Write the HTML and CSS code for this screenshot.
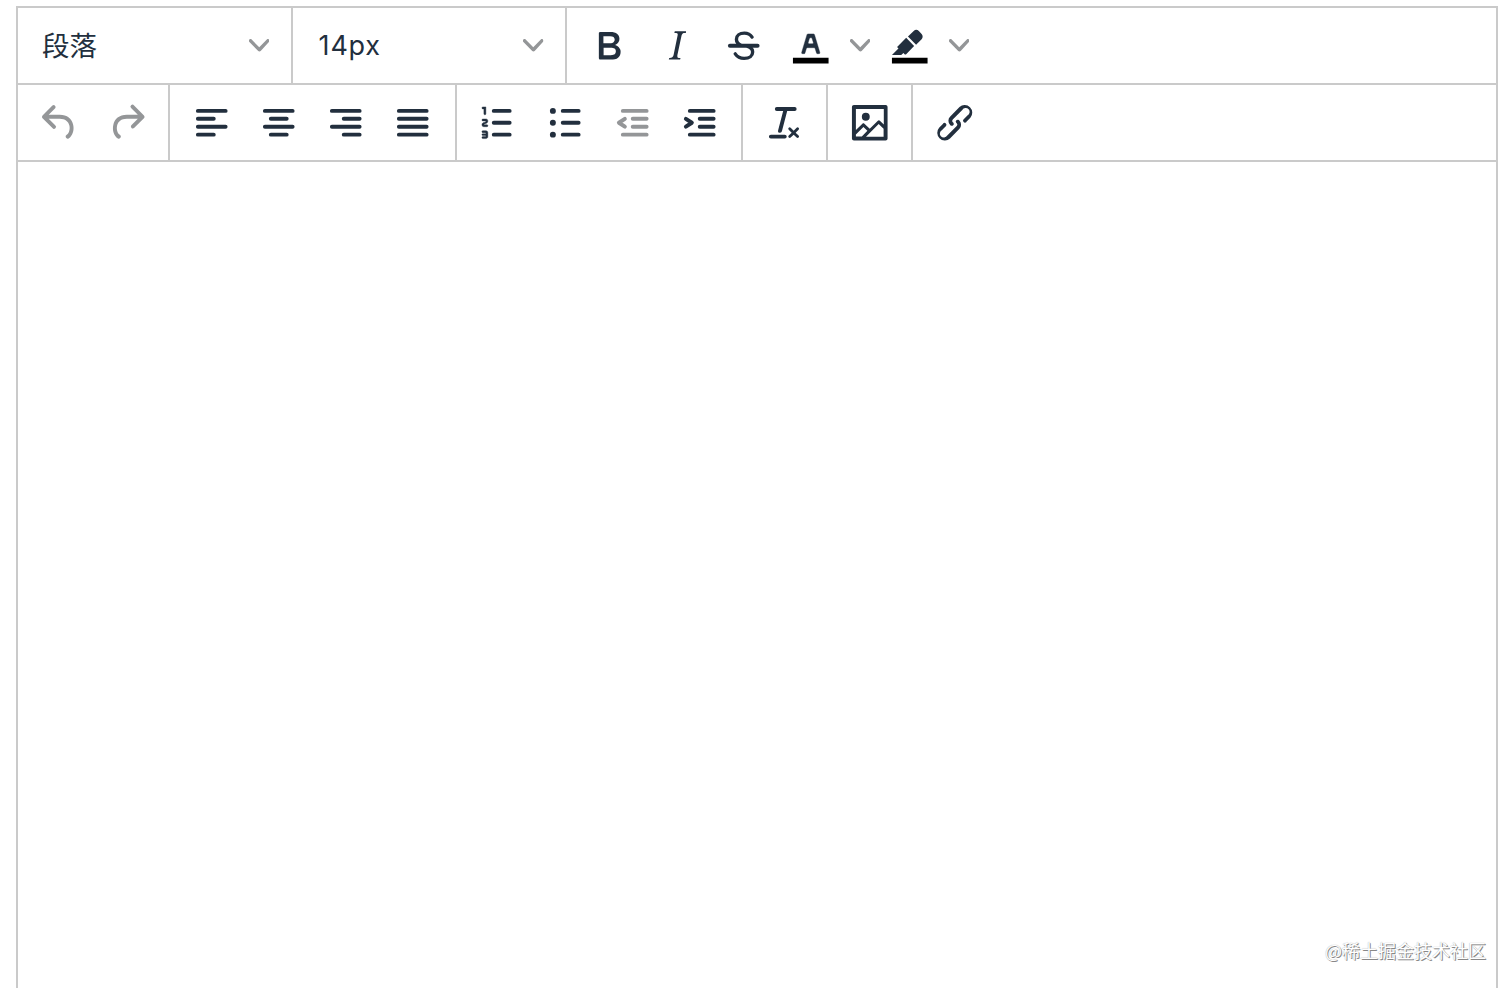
FILE: index.html
```html
<!DOCTYPE html>
<html lang="zh-CN">
<head>
<meta charset="utf-8">
<title>编辑器</title>
<link rel="stylesheet" href="styles.css">
</head>
<body>
<svg class="sprite" aria-hidden="true">
  <symbol id="chevron" viewBox="0 0 10 10"><path d="M8.7 2.2c.3-.3.8-.3 1 0 .4.4.4.9 0 1.2L5.7 7.8c-.3.3-.9.3-1.2 0L.2 3.4a.8.8 0 0 1 0-1.2c.3-.3.8-.3 1.1 0L5 6l3.7-3.8z"/></symbol>
</svg>
<main class="editor">
  <header class="toolbar">
    <div class="row">
      <div class="group group-select"><button class="select"><span class="label">段落</span><svg class="chevron"><use href="#chevron"/></svg></button></div>
      <div class="group group-select"><button class="select"><span class="label size">14px</span><svg class="chevron"><use href="#chevron"/></svg></button></div>
      <div class="group">
        <button class="btn"><svg class="icon" viewBox="0 0 24 24"><path fill-rule="evenodd" d="M7.8 19c-.3 0-.5 0-.6-.2l-.2-.5V5.7c0-.2 0-.4.2-.5l.6-.2h5c1.5 0 2.7.3 3.5 1 .7.6 1.1 1.4 1.1 2.5a3 3 0 0 1-.6 1.9c-.4.6-1 1-1.6 1.2.4.1.9.3 1.3.6s.8.7 1 1.2c.4.4.5 1 .5 1.6 0 1.3-.4 2.3-1.3 3-.8.7-2.1 1-3.8 1H7.8zm5-8.3c.6 0 1.2-.1 1.6-.5.4-.3.6-.7.6-1.3 0-1.1-.8-1.7-2.3-1.7H9.3v3.5h3.4zm.5 6c.7 0 1.3-.1 1.7-.4.4-.4.6-.9.6-1.5s-.2-1-.7-1.4c-.4-.3-1-.4-2-.4H9.4v3.8h4z"/></svg></button>
        <button class="btn"><svg class="icon" viewBox="0 0 24 24"><path d="M16.7 4.7l-.1.9h-.3c-.6 0-1 0-1.4.3-.3.3-.4.6-.5 1.1l-2.1 9.8v.6c0 .5.4.8 1.4.8h.2l-.2.8H8l.2-.8h.2c1.1 0 1.8-.5 2-1.5l2-9.8.1-.5c0-.6-.4-.8-1.4-.8h-.3l.2-.9h5.8z"/></svg></button>
        <button class="btn"><svg class="icon" viewBox="0 0 24 24"><path class="curve" d="M16.2 7.6C15.3 6.2 13.9 5.6 12.3 5.6 9.9 5.6 8.3 6.8 8.3 8.7c0 1.2.7 2.3 2.2 3M14 12.3c1.7.6 2.5 1.5 2.5 2.8 0 2-1.7 3.3-4.3 3.3-2 0-3.5-.8-4.5-2.3"/><path d="M5 11h14a1 1 0 0 1 0 2H5a1 1 0 0 1 0-2z"/></svg></button>
        <button class="btn"><svg class="icon" viewBox="0 0 24 24"><path class="swatch" d="M3 18h18v3H3z"/><path class="letter" fill-rule="evenodd" d="M8.7 16h-.8a.5.5 0 0 1-.5-.6l2.7-9c.1-.3.3-.4.5-.4h2.8c.2 0 .4.1.5.4l2.7 9a.5.5 0 0 1-.5.6h-.8a.5.5 0 0 1-.4-.4l-.7-2.2c0-.3-.3-.4-.5-.4h-3.4c-.2 0-.4.1-.5.4l-.7 2.2c0 .3-.2.4-.4.4zm2.6-7.6l-.6 2a.5.5 0 0 0 .5.6h1.6a.5.5 0 0 0 .5-.6l-.6-2c0-.3-.3-.4-.5-.4h-.4c-.2 0-.4.1-.5.4z"/></svg></button>
        <button class="drop"><svg class="chevron"><use href="#chevron"/></svg></button>
        <button class="btn"><svg class="icon" viewBox="0 0 24 24"><path class="swatch" d="M3 18h18v3H3z"/><path d="M7.7 16.7H3l3.3-3.3-.7-.8L10.2 8l4 4.1-4 4.2c-.2.2-.6.2-.8 0l-.6-.7-1.1 1.1zm3.4-9.4l2.9-2.8a2 2 0 0 1 2.6 0L18 6c.7.7.7 2 0 2.7l-2.8 2.8z"/></svg></button>
        <button class="drop"><svg class="chevron"><use href="#chevron"/></svg></button>
      </div>
    </div>
    <div class="row">
      <div class="group">
        <button class="btn disabled"><svg class="icon" viewBox="0 0 24 24"><path d="M6.4 8H12c3.7 0 6.2 2 6.8 5.1.6 2.7-.4 5.6-2.3 6.8a1 1 0 0 1-1-1.8c1.1-.6 1.8-2.7 1.4-4.6-.5-2.1-2.1-3.5-4.9-3.5H6.4l3.3 3.3a1 1 0 1 1-1.4 1.4l-5-5a1 1 0 0 1 0-1.4l5-5a1 1 0 0 1 1.4 1.4L6.4 8z"/></svg></button>
        <button class="btn disabled"><svg class="icon" viewBox="0 0 24 24"><path d="M17.6 10H12c-2.8 0-4.4 1.4-4.9 3.5-.4 2 .3 4 1.4 4.6a1 1 0 1 1-1 1.8c-2-1.2-2.9-4.1-2.3-6.8.6-3 3-5.1 6.8-5.1h5.6l-3.3-3.3a1 1 0 1 1 1.4-1.4l5 5a1 1 0 0 1 0 1.4l-5 5a1 1 0 0 1-1.4-1.4l3.3-3.3z"/></svg></button>
      </div>
      <div class="group">
        <button class="btn"><svg class="icon line" viewBox="0 0 24 24"><path d="M5 6h14M5 10h8M5 14h14M5 18h8"/></svg></button>
        <button class="btn"><svg class="icon line" viewBox="0 0 24 24"><path d="M5 6h14M8 10h8M5 14h14M8 18h8"/></svg></button>
        <button class="btn"><svg class="icon line" viewBox="0 0 24 24"><path d="M5 6h14M11 10h8M5 14h14M11 18h8"/></svg></button>
        <button class="btn"><svg class="icon line" viewBox="0 0 24 24"><path d="M5 6h14M5 10h14M5 14h14M5 18h14"/></svg></button>
      </div>
      <div class="group">
        <button class="btn"><svg class="icon" viewBox="0 0 24 24"><path d="M10 17h8a1 1 0 0 1 0 2h-8a1 1 0 0 1 0-2zm0-6h8a1 1 0 0 1 0 2h-8a1 1 0 0 1 0-2zm0-6h8a1 1 0 0 1 0 2h-8a1 1 0 0 1 0-2z"/><path class="digits" d="M6 4v3.5c0 .3-.2.5-.5.5a.5.5 0 0 1-.5-.5V5h-.5a.5.5 0 0 1 0-1H6zm-1 8.8l.2.2h1.3c.3 0 .5.2.5.5s-.2.5-.5.5H4.9a1 1 0 0 1-.9-1V13c0-.4.3-.8.6-1l1.2-.4.2-.3a.2.2 0 0 0-.2-.2H4.5a.5.5 0 0 1-.5-.5c0-.3.2-.5.5-.5h1.6c.5 0 .9.4.9 1v.1c0 .4-.3.8-.6 1l-1.2.4-.2.3zM7 17v2c0 .6-.4 1-1 1H4.5a.5.5 0 0 1 0-1h1.2c.2 0 .3-.1.3-.3 0-.2-.1-.3-.3-.3H4.4a.4.4 0 1 1 0-.8h1.3c.2 0 .3-.1.3-.3 0-.2-.1-.3-.3-.3H4.5a.5.5 0 1 1 0-1H6c.6 0 1 .4 1 1z"/></svg></button>
        <button class="btn"><svg class="icon" viewBox="0 0 24 24"><path d="M11 5h8a1 1 0 0 1 0 2h-8a1 1 0 0 1 0-2zm0 6h8a1 1 0 0 1 0 2h-8a1 1 0 0 1 0-2zm0 6h8a1 1 0 0 1 0 2h-8a1 1 0 0 1 0-2z"/><circle cx="6" cy="6" r="1.5"/><circle cx="6" cy="12" r="1.5"/><circle cx="6" cy="18" r="1.5"/></svg></button>
        <button class="btn disabled"><svg class="icon line" viewBox="0 0 24 24"><path d="M7 6h12M12 10h7M12 14h7M7 18h12M8 10l-3 2 3 2"/></svg></button>
        <button class="btn"><svg class="icon line" viewBox="0 0 24 24"><path d="M7 6h12M12 10h7M12 14h7M7 18h12M5 10l3 2-3 2"/></svg></button>
      </div>
      <div class="group">
        <button class="btn"><svg class="icon" viewBox="0 0 24 24"><path d="M13.2 6a1 1 0 0 1 0 .2l-2.6 10a1 1 0 0 1-1 .8h-.2a.8.8 0 0 1-.8-1l2.6-10H8a1 1 0 1 1 0-2h9a1 1 0 0 1 0 2h-3.8zM5 18h7a1 1 0 0 1 0 2H5a1 1 0 0 1 0-2zm13 1.5L16.5 18 15 19.5a.7.7 0 0 1-1-1l1.5-1.5-1.5-1.5a.7.7 0 0 1 1-1l1.5 1.5 1.5-1.5a.7.7 0 0 1 1 1L17.5 17l1.5 1.5a.7.7 0 0 1-1 1z"/></svg></button>
      </div>
      <div class="group">
        <button class="btn"><svg class="icon" viewBox="0 0 24 24"><path fill-rule="evenodd" d="M5 15.7l3.3-3.2c.3-.3.7-.3 1 0L12 15l4.1-4c.3-.4.8-.4 1 0l2 1.9V5H5v10.7zM5 18V19h3l2.8-2.9-2-2L5 17.9zm14-3l-2.5-2.4-6.4 6.5H19v-4zM4 3h16c.6 0 1 .4 1 1v16c0 .6-.4 1-1 1H4a1 1 0 0 1-1-1V4c0-.6.4-1 1-1zm6 8a2 2 0 1 0 0-4 2 2 0 0 0 0 4z"/></svg></button>
      </div>
      <div class="group">
        <button class="btn"><svg class="icon" viewBox="0 0 24 24"><path d="M6.2 12.3a1 1 0 0 1 1.4 1.4l-2 2a2 2 0 1 0 2.6 2.8l4.8-4.8a1 1 0 0 0 0-1.4 1 1 0 1 1 1.4-1.3 2.9 2.9 0 0 1 0 4L9.6 20a3.9 3.9 0 0 1-5.5-5.5l2-2zm11.6-.6a1 1 0 0 1-1.4-1.4l2-2a2 2 0 1 0-2.6-2.8L11 10.3a1 1 0 0 0 0 1.4A1 1 0 1 1 9.6 13a2.9 2.9 0 0 1 0-4L14.4 4a3.9 3.9 0 0 1 5.5 5.5l-2 2z"/></svg></button>
      </div>
    </div>
  </header>
  <section class="content"><span class="watermark">@稀土掘金技术社区</span></section>
</main>
</body>
</html>
```
FILE: styles.css
```css
* { box-sizing: border-box; }
body {
  margin: 0;
  height: 988px;
  padding: 6px 14px 0 16px;
  overflow: hidden;
  background: #fff;
  color: #222f3e;
  font-family: Inter, "Noto Sans CJK SC", sans-serif;
}
.sprite { display: none; }
.editor {
  display: flex;
  flex-direction: column;
  height: 982px;
  border: 2px solid #cacaca;
  border-bottom: 0;
}
.row {
  display: flex;
  height: 77px;
  border-bottom: 2px solid #cacaca;
}
.group {
  display: flex;
  align-items: center;
  padding: 0 7.85px;
  border-right: 2px solid #cacaca;
}
.row .group:last-child { border-right: 0; padding-left: 8.3px; }
.group-select { width: 274.6px; padding: 0; }
button {
  display: flex;
  align-items: center;
  justify-content: center;
  padding: 0;
  border: 0;
  background: none;
  color: inherit;
  font: inherit;
}
.select {
  width: 100%;
  height: 100%;
  padding: 0 21.5px 0 24px;
  justify-content: space-between;
}
.group-select + .group-select .select { padding-left: 26px; }
.label { font-size: 27.5px; line-height: 40px; }
.label.size { font-size: 27px; letter-spacing: .8px; }
.btn { width: 67.2px; height: 67px; }
.drop { width: 31.8px; height: 67px; }
.icon {
  display: block;
  width: 47.5px;
  height: 47.5px;
  fill: #222f3e;
}
.line { fill: none; stroke: #222f3e; stroke-width: 2; stroke-linecap: round; stroke-linejoin: round; }
.curve { fill: none; stroke: #222f3e; stroke-width: 1.7; stroke-linecap: round; }
.digits, .letter { stroke: #222f3e; stroke-width: .2; }
.disabled .icon { fill: #949698; }
.disabled .line { fill: none; stroke: #949698; }
.swatch { fill: #000; }
.chevron { width: 20.5px; height: 20.5px; fill: #949698; flex: none; }
.content {
  flex: 1;
  display: flex;
  align-items: flex-end;
  justify-content: flex-end;
  padding: 0 10px 24px 0;
}
.watermark {
  color: #fff;
  font: 18px/28px "Noto Sans CJK SC", sans-serif;
  text-shadow: 1px 1px 0 #888, 0 0 1px #999;
}
```
